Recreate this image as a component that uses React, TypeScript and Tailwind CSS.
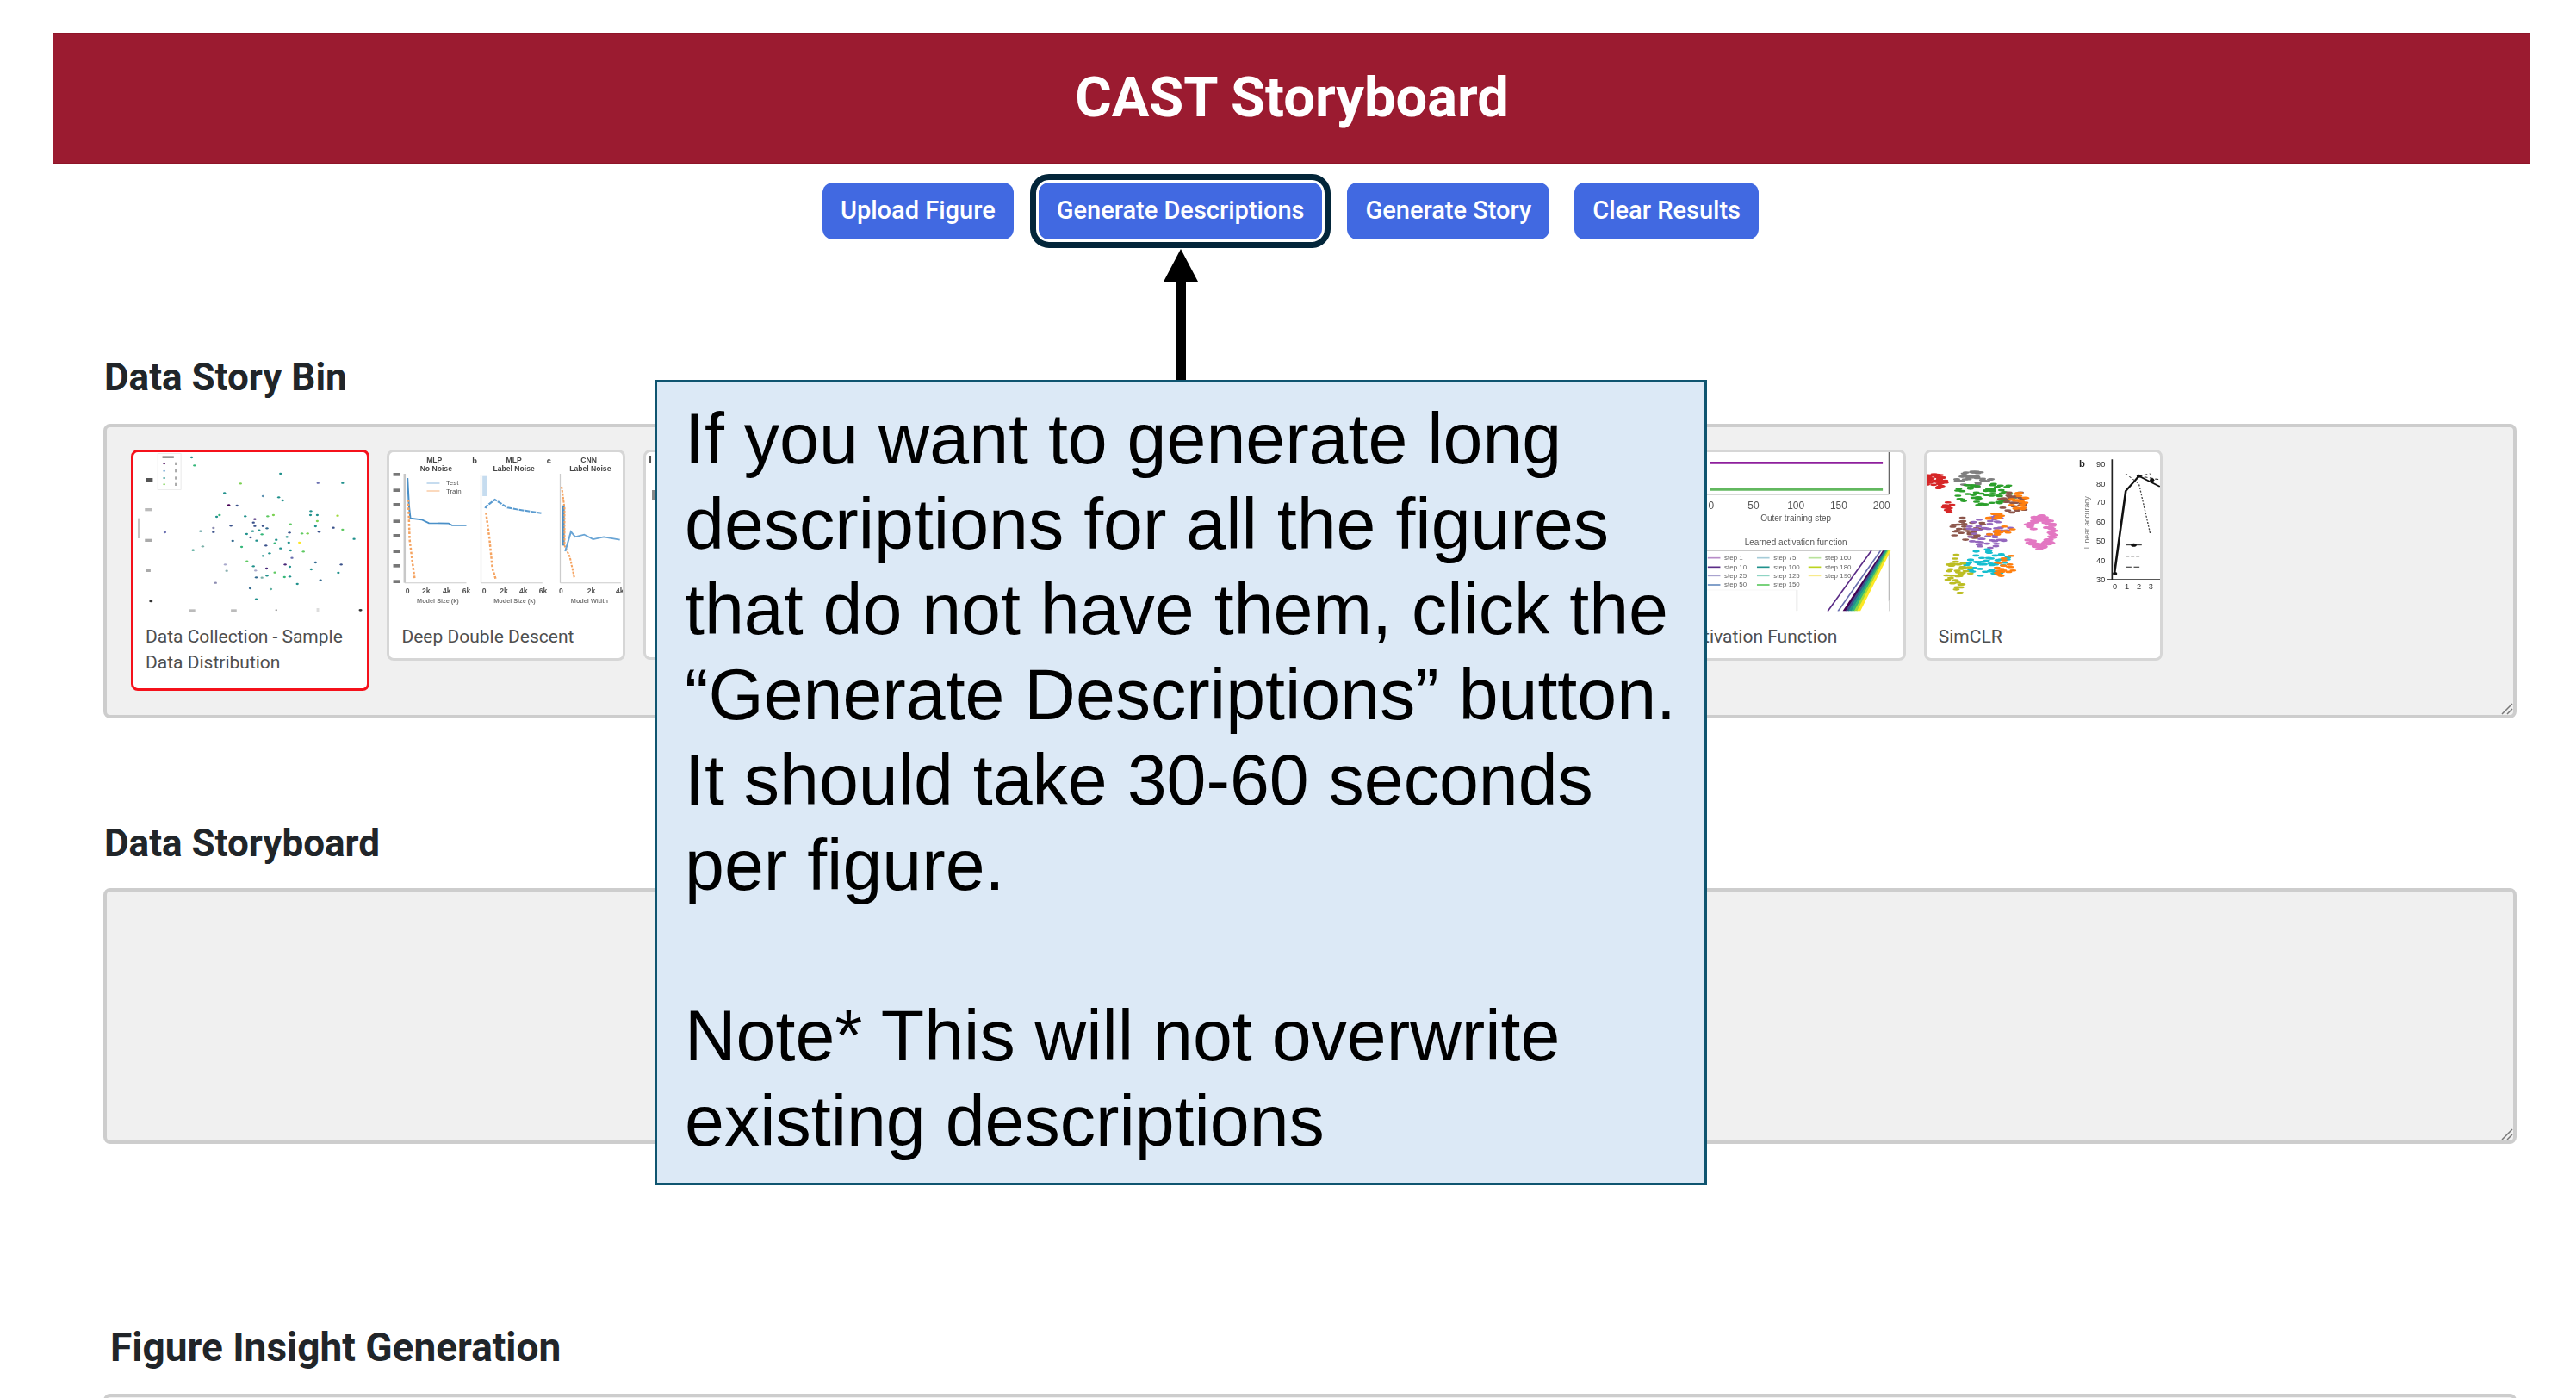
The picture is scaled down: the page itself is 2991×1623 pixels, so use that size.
const dots: [number, number, string][] = [
  [225, 93, "#21918c"], [233, 121, "#35b779"], [474, 150, "#21918c"], [362, 184, "#7ad151"], [579, 182, "#6a6fb0"], [648, 182, "#21918c"],
  [317, 217, "#21918c"], [425, 228, "#5b90b0"], [469, 232, "#21918c"], [480, 243, "#21918c"], [329, 259, "#440154"], [352, 261, "#3b528b"],
  [559, 280, "#21918c"], [558, 294, "#21918c"], [577, 294, "#21918c"], [295, 300, "#21918c"], [303, 294, "#35b779"], [375, 298, "#21918c"],
  [402, 308, "#482878"], [438, 298, "#5ec962"], [454, 294, "#7ad151"], [634, 296, "#a0da39"], [398, 320, "#3b528b"], [577, 315, "#7ad151"],
  [286, 339, "#8b8bb0"], [335, 331, "#3b528b"], [402, 332, "#3b528b"], [425, 332, "#3b528b"], [436, 340, "#31688e"], [502, 326, "#5ec962"],
  [572, 333, "#21918c"], [622, 338, "#3b528b"], [648, 345, "#5ec962"], [150, 354, "#6a6fb0"], [250, 350, "#5f9ea0"], [286, 353, "#3b528b"],
  [379, 360, "#21918c"], [396, 350, "#21918c"], [414, 347, "#21918c"], [422, 361, "#35b779"], [499, 355, "#3b528b"], [534, 358, "#5ec962"],
  [550, 358, "#7ad151"], [582, 352, "#3b528b"], [390, 372, "#3b528b"], [407, 383, "#21918c"], [340, 384, "#31688e"], [492, 370, "#21918c"],
  [680, 377, "#21918c"], [462, 380, "#21918c"], [458, 392, "#35b779"], [497, 390, "#21918c"], [527, 390, "#fde725"], [256, 403, "#7ab0a8"],
  [229, 416, "#43a08f"], [433, 400, "#3b528b"], [365, 405, "#35b779"], [474, 410, "#21918c"], [502, 417, "#21918c"], [538, 421, "#5ec962"],
  [443, 427, "#21918c"], [425, 436, "#21918c"], [506, 443, "#6a6fb0"], [380, 455, "#5ec962"], [398, 472, "#21918c"], [319, 466, "#aaaacc"],
  [487, 466, "#482878"], [500, 474, "#21918c"], [572, 459, "#31688e"], [644, 466, "#3b528b"], [323, 488, "#8ab0b0"], [435, 480, "#482878"],
  [404, 487, "#aaaacc"], [458, 494, "#5ec962"], [560, 483, "#21918c"], [636, 495, "#21918c"], [406, 511, "#31688e"], [422, 512, "#7ab0a8"],
  [436, 505, "#21918c"], [485, 510, "#35b779"], [500, 508, "#21918c"], [586, 521, "#31688e"], [521, 534, "#21918c"], [292, 530, "#8b8bb0"],
  [389, 549, "#31688e"], [447, 552, "#5fb0a0"], [406, 587, "#21918c"],
];

function jitter(seed: number) {
  const x = Math.sin(seed * 91.17) * 43758.5453;
  return x - Math.floor(x);
}

const blobs: { cx: number; cy: number; rx: number; ry: number; color: string; n: number }[] = [
  { cx: 437, cy: 178, rx: 20, ry: 28, color: "#d62728", n: 45 },
  { cx: 505, cy: 168, rx: 32, ry: 32, color: "#7f7f7f", n: 40 },
  { cx: 530, cy: 220, rx: 55, ry: 42, color: "#2ca02c", n: 55 },
  { cx: 462, cy: 265, rx: 8, ry: 20, color: "#d62728", n: 14 },
  { cx: 575, cy: 250, rx: 25, ry: 40, color: "#8c564b", n: 30 },
  { cx: 585, cy: 250, rx: 14, ry: 35, color: "#ff7f0e", n: 20 },
  { cx: 495, cy: 340, rx: 30, ry: 40, color: "#8c564b", n: 30 },
  { cx: 535, cy: 350, rx: 40, ry: 60, color: "#9467bd", n: 50 },
  { cx: 550, cy: 330, rx: 25, ry: 45, color: "#ff7f0e", n: 20 },
  { cx: 530, cy: 460, rx: 38, ry: 50, color: "#17becf", n: 50 },
  { cx: 560, cy: 470, rx: 20, ry: 45, color: "#ff7f0e", n: 20 },
  { cx: 478, cy: 500, rx: 22, ry: 70, color: "#bcbd22", n: 40 },
];

function ScatterThumb() {
  return (
    <svg viewBox="62 75 654 576" preserveAspectRatio="none" className="h-full w-full blur-[0.6px]">
      <rect x="130" y="80" width="65" height="125" fill="none" stroke="#e5e5e5" strokeWidth="2" />
      {[115, 140, 165, 187].map((y, i) => (
        <g key={y}>
          <ellipse cx="148" cy={y} rx="3" ry="3" fill={["#440154", "#6a9fd0", "#21918c", "#7ad151"][i]} />
          <rect x="178" y={y - 5} width="7" height="10" fill="#aaa" />
        </g>
      ))}
      <rect x="143" y="88" width="32" height="8" fill="#999" />
      <rect x="96" y="165" width="20" height="12" fill="#555" />
      <rect x="94" y="270" width="20" height="10" fill="#bbb" />
      <rect x="94" y="377" width="20" height="10" fill="#aaa" />
      <rect x="96" y="482" width="14" height="10" fill="#aaa" />
      <rect x="74" y="305" width="5" height="70" fill="#c4c4c4" />
      <ellipse cx="111" cy="594" rx="5" ry="4" fill="#333" />
      <rect x="217" y="622" width="18" height="10" fill="#bbb" />
      <rect x="335" y="622" width="16" height="10" fill="#bbb" />
      <ellipse cx="462" cy="625" rx="3" ry="3" fill="#999" />
      <rect x="575" y="618" width="7" height="14" fill="#ddd" />
      <ellipse cx="698" cy="625" rx="5" ry="4" fill="#333" />
      {dots.map(([x, y, c]) => (
        <ellipse key={`${x}-${y}`} cx={x} cy={y} rx="4" ry="3.5" fill={c} />
      ))}
    </svg>
  );
}

function DescentThumb() {
  return (
    <svg viewBox="779 75 654 576" preserveAspectRatio="none" className="h-full w-full blur-[0.6px]" fontFamily="Liberation Sans, sans-serif">
      {[
        ["MLP", 905, 112], ["MLP", 1128, 112], ["CNN", 1338, 112],
        ["No Noise", 910, 140], ["Label Noise", 1128, 140], ["Label Noise", 1342, 140],
      ].map(([t, x, y]) => (
        <text key={`${t}-${x}`} transform={`translate(${x},${y}) scale(0.8,1)`} fontSize="26" fontWeight="700" textAnchor="middle" fill="#444">{t}</text>
      ))}
      <text transform="translate(1018,114) scale(0.8,1)" fontSize="28" fontWeight="700" textAnchor="middle" fill="#444">b</text>
      <text transform="translate(1226,114) scale(0.8,1)" fontSize="28" fontWeight="700" textAnchor="middle" fill="#444">c</text>
      {[152, 207, 257, 315, 365, 420, 470, 525].map((y) => (
        <rect key={y} x="790" y={y - 5} width="20" height="11" fill="#777" />
      ))}
      <rect x="819" y="150" width="6" height="380" fill="#c8c8c8" />
      <path d="M1036 155V530M1258 150V530M822 530H995M1036 530H1208M1258 530H1428" stroke="#ccc" strokeWidth="3" fill="none" />
      <path d="M884 183h36" stroke="#c6dcef" strokeWidth="6" />
      <path d="M884 210h36" stroke="#fbd9bd" strokeWidth="6" />
      <text transform="translate(938,190) scale(0.8,1)" fontSize="24" fill="#555">Test</text>
      <text transform="translate(938,218) scale(0.8,1)" fontSize="24" fill="#555">Train</text>
      <path d="M830 165L834 260L838 305L870 310L890 322L945 323L955 330L995 330" stroke="#4a90c8" strokeWidth="5" fill="none" />
      <path d="M832 240L836 380L843 450L850 515" stroke="#f5a462" strokeWidth="6" strokeDasharray="8 6" fill="none" />
      <rect x="1040" y="158" width="12" height="70" fill="#c6dcef" />
      <path d="M1048 270L1052 262L1075 240L1110 268L1140 275L1205 287" stroke="#5a9bd0" strokeWidth="6" strokeDasharray="14 3" fill="none" />
      <path d="M1050 285L1060 380L1068 480L1078 520" stroke="#f5a462" strokeWidth="6" strokeDasharray="8 6" fill="none" />
      <path d="M1267 260V400" stroke="#4a90c8" strokeWidth="7" />
      <path d="M1262 195L1270 270V400L1285 440L1298 515" stroke="#f5a462" strokeWidth="5" strokeDasharray="8 4" fill="none" />
      <path d="M1272 420L1288 352L1300 370L1325 362L1350 378L1380 370L1425 380" stroke="#6aa5d5" strokeWidth="5" fill="none" />
      {[[830, "0"], [882, "2k"], [940, "4k"], [995, "6k"], [1045, "0"], [1100, "2k"], [1155, "4k"], [1210, "6k"], [1260, "0"], [1345, "2k"], [1425, "4k"]].map(([x, t]) => (
        <text key={x} transform={`translate(${x},566) scale(0.8,1)`} fontSize="26" fontWeight="700" textAnchor="middle" fill="#555">{t}</text>
      ))}
      {[[915, "Model Size (k)"], [1130, "Model Size (k)"], [1340, "Model Width"]].map(([x, t]) => (
        <text key={x} transform={`translate(${x},600) scale(0.8,1)`} fontSize="22" fontWeight="700" textAnchor="middle" fill="#777">{t}</text>
      ))}
    </svg>
  );
}

function SliverThumb() {
  return (
    <svg viewBox="0 0 270 192" preserveAspectRatio="none" className="h-full w-full blur-[0.5px]">
      <rect x="4" y="4" width="2" height="9" fill="#555" />
      <rect x="7" y="44" width="3" height="11" fill="#888" />
    </svg>
  );
}

function ActivationThumb() {
  const fans = ["#440154", "#3b528b", "#21918c", "#35b779", "#a0da39", "#fde725"];
  return (
    <svg viewBox="-30 75 408 576" preserveAspectRatio="none" className="h-full w-full blur-[0.6px]" fontFamily="Liberation Sans, sans-serif">
      <path d="M40 112H342" stroke="#8e1f9c" strokeWidth="8" />
      <path d="M40 205H342" stroke="#62b85f" strokeWidth="9" />
      <path d="M353 72V222M30 222H353" stroke="#666" strokeWidth="2" />
      {[[42, "0"], [116, "50"], [190, "100"], [265, "150"], [340, "200"]].map(([x, t]) => (
        <text key={x} transform={`translate(${x},272) scale(0.5,1)`} fontSize="36" textAnchor="middle" fill="#555">{t}</text>
      ))}
      <text transform="translate(190,316) scale(0.5,1)" fontSize="30" textAnchor="middle" fill="#555">Outer training step</text>
      <text transform="translate(190,398) scale(0.5,1)" fontSize="30" textAnchor="middle" fill="#555">Learned activation function</text>
      <path d="M30 418H355M353 418V628M192 555V628" stroke="#bbb" strokeWidth="2" />
      <path d="M30 555H192" stroke="#eee" strokeWidth="2" />
      {[
        [36, 443, "#b88cc8", "step 1"], [36, 475, "#5b2c86", "step 10"], [36, 505, "#a9a3cf", "step 25"], [36, 537, "#6a8fc0", "step 50"],
        [122, 443, "#a6ccd8", "step 75"], [122, 475, "#21918c", "step 100"], [122, 505, "#8fd4c4", "step 125"], [122, 537, "#5ec962", "step 150"],
        [212, 443, "#b9e39c", "step 160"], [212, 475, "#bcd420", "step 180"], [212, 505, "#f8ea8c", "step 190"],
      ].map(([x, y, c, t]) => (
        <g key={`${x}-${y}`}>
          <path d={`M${x} ${y}h22`} stroke={c as string} strokeWidth="5" />
          <text transform={`translate(${(x as number) + 29},${(y as number) + 7}) scale(0.5,1)`} fontSize="24" fill="#666">{t}</text>
        </g>
      ))}
      <path d="M246 628L322 418" stroke="#5b2c86" strokeWidth="3" fill="none" />
      <path d="M264 628L338 418" stroke="#6a6fb0" strokeWidth="3" fill="none" />
      {fans.map((c, i) => (
        <path key={c} d={`M${272 + i * 5} 628L${342 + i * 2} 418H${346 + i * 2}L${278 + i * 5} 628Z`} fill={c} />
      ))}
      <path d="M340 628L353 590V628Z" fill="#fff" />
    </svg>
  );
}

function SimclrThumb() {
  const pink = Array.from({ length: 70 }, (_, i) => {
    const a = (i / 70) * Math.PI * 1.75 - Math.PI * 0.9;
    return [622 + Math.cos(a) * (12 + jitter(i) * 14), 355 + Math.sin(a) * (40 + jitter(i + 50) * 20)];
  });
  return (
    <svg viewBox="423 75 409 576" preserveAspectRatio="none" className="h-full w-full blur-[0.5px]" fontFamily="Liberation Sans, sans-serif">
      {blobs.map((b, bi) =>
        Array.from({ length: b.n }, (_, i) => {
          const a = jitter(bi * 100 + i) * Math.PI * 2;
          const r = Math.sqrt(jitter(bi * 100 + i + 0.5));
          return <ellipse key={`${bi}-${i}`} cx={b.cx + Math.cos(a) * r * b.rx} cy={b.cy + Math.sin(a) * r * b.ry} rx="6" ry="4" fill={b.color} />;
        })
      )}
      {pink.map(([x, y], i) => (
        <ellipse key={i} cx={x} cy={y} rx="7" ry="5" fill="#e377c2" />
      ))}
      <path d="M748 100V518M740 518H832" stroke="#222" strokeWidth="2.5" fill="none" />
      <path d="M752 498L772 210L795 158L832 195" stroke="#111" strokeWidth="4" fill="none" />
      <path d="M772 150L795 185L815 360" stroke="#444" strokeWidth="2" strokeDasharray="6 5" fill="none" />
      <path d="M795 158L815 150M795 158L830 170" stroke="#222" strokeWidth="3" strokeDasharray="6 4" fill="none" />
      <ellipse cx="753" cy="498" rx="4" ry="6" fill="#111" />
      <ellipse cx="795" cy="158" rx="4" ry="6" fill="#111" />
      <ellipse cx="818" cy="172" rx="4" ry="6" fill="#111" />
      <text transform="translate(690,125) scale(0.5,1)" fontSize="34" fontWeight="700" fill="#222">b</text>
      {[[118, "90"], [185, "80"], [250, "70"], [318, "60"], [385, "50"], [453, "40"], [520, "30"]].map(([y, t]) => (
        <text key={y} transform={`translate(736,${(y as number) + 9}) scale(0.5,1)`} fontSize="28" textAnchor="end" fill="#333">{t}</text>
      ))}
      <text transform="translate(708,320) rotate(-90) scale(1,0.5)" fontSize="26" textAnchor="middle" fill="#777">Linear accuracy</text>
      {[[753, "0"], [774, "1"], [795, "2"], [816, "3"]].map(([x, t]) => (
        <text key={x} transform={`translate(${x},553) scale(0.5,1)`} fontSize="28" textAnchor="middle" fill="#333">{t}</text>
      ))}
      <path d="M772 398h28" stroke="#222" strokeWidth="3" />
      <ellipse cx="786" cy="398" rx="5" ry="6" fill="#111" />
      <path d="M772 437h26" stroke="#222" strokeWidth="3" strokeDasharray="6 3" />
      <path d="M772 475h26" stroke="#222" strokeWidth="3" strokeDasharray="10 4" />
    </svg>
  );
}

const figures = [
  { title: "Data Collection - Sample Data Distribution", thumb: <ScatterThumb />, selected: true },
  { title: "Deep Double Descent", thumb: <DescentThumb /> },
  { title: "", thumb: <SliverThumb /> },
  { title: "", thumb: null },
  { title: "", thumb: null },
  { title: "", thumb: null },
  { title: "Activation Function", thumb: <ActivationThumb /> },
  { title: "SimCLR", thumb: <SimclrThumb /> },
];

function FigureCard({ title, thumb, selected }: { title: string; thumb: React.ReactNode; selected?: boolean }) {
  return (
    <div
      className={
        selected
          ? "flex w-[277px] shrink-0 flex-col overflow-hidden rounded-lg border-[3px] border-[#f5111b] bg-white pb-[15px]"
          : "flex min-h-[244px] w-[277px] shrink-0 flex-col overflow-hidden rounded-lg border-[3px] border-[#d6d6d6] bg-white pb-2.5"
      }
    >
      <div className="h-[192px] w-full">{thumb}</div>
      <div className="mt-[7px] px-3.5 text-[21px] leading-[30px] text-[#4f4f4f]">{title}</div>
    </div>
  );
}

function Panel({ className, children }: { className: string; children?: React.ReactNode }) {
  return (
    <div className={`relative overflow-hidden rounded-lg border-[4px] border-[#cdcdcd] bg-[#f0f0f0] ${className}`}>
      {children}
      <svg className="absolute bottom-0 right-0" width="16" height="16" viewBox="0 0 16 16">
        <path d="M15 3L3 15M15 9L9 15" stroke="#777" strokeWidth="1.5" fill="none" />
      </svg>
    </div>
  );
}

const buttonClass = "h-[66px] rounded-xl bg-[#4169e1] px-[21px] text-[29px] font-medium text-white";

export default function App() {
  return (
    <div className="relative h-[1623px] overflow-hidden bg-white pt-[38px] font-[Roboto,sans-serif] text-[#212529]">
      <header className="ml-[62px] mr-[53px] flex h-[152px] items-center justify-center border-y border-[#8e1428] bg-[#9b1b30]">
        <h1 className="text-[65px] font-bold text-white">CAST Storyboard</h1>
      </header>

      <div className="mt-[22px] flex justify-center gap-[29px] pl-[6px]">
        <button className={buttonClass}>Upload Figure</button>
        <button className={`${buttonClass} outline-[7px] outline-offset-[3px] outline-[#03263a]`}>Generate Descriptions</button>
        <button className={buttonClass}>Generate Story</button>
        <button className={buttonClass}>Clear Results</button>
      </div>

      <main className="pl-[120px] pr-[69px]">
        <h2 className="mt-[136px] h-[48px] pl-[1px] text-[44px] leading-[48px] font-bold">Data Story Bin</h2>
        <Panel className="mt-[30px] h-[342px]">
          <div className="flex items-start gap-[20.4px] pl-[28px] pt-[26px]">
            {figures.map((f, i) => (
              <FigureCard key={i} title={f.title} thumb={f.thumb} selected={f.selected} />
            ))}
          </div>
        </Panel>

        <h2 className="mt-[121px] h-[48px] pl-[1px] text-[44px] leading-[48px] font-bold">Data Storyboard</h2>
        <Panel className="mt-[28px] h-[297px]" />

        <h2 className="mt-[212px] h-[48px] pl-[8px] text-[46px] leading-[48px] font-bold">Figure Insight Generation</h2>
        <Panel className="mt-[30px] h-[300px]" />
      </main>

      {/* annotation over the page */}
      <svg className="absolute left-[1350px] top-[289px]" width="42" height="153" viewBox="0 0 42 153">
        <path d="M21 0L41 38H27V153H15V38H1Z" fill="#000" />
      </svg>
      <div className="absolute left-[760px] top-[441px] h-[935px] w-[1222px] border-[3px] border-[#0f5570] bg-[#dce9f6] pl-[32px] pt-[16px] font-['Liberation_Sans',Arial,sans-serif] text-[82.5px] leading-[99px] whitespace-nowrap text-black">
        If you want to generate long
        <br />
        descriptions for all the figures
        <br />
        that do not have them, click the
        <br />
        “Generate Descriptions” button.
        <br />
        It should take 30-60 seconds
        <br />
        per figure.
        <br />
        <br />
        Note* This will not overwrite
        <br />
        existing descriptions
      </div>
    </div>
  );
}
